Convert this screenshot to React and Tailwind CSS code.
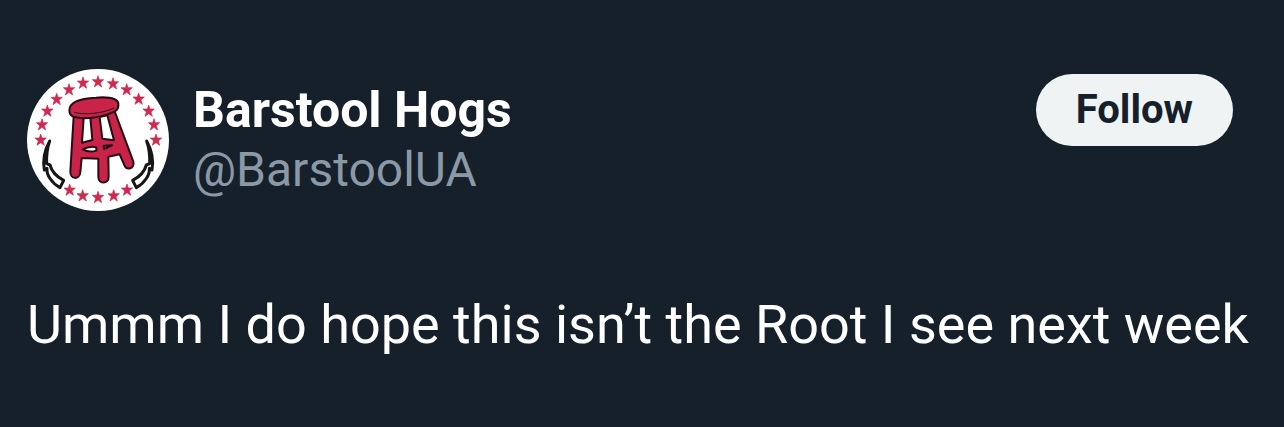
const STARS = [
  [62, 240], [66, 194], [82, 153], [110, 118], [147, 89], [189, 69], [234, 65],
  [279, 71], [320, 89], [356, 117], [386, 153], [402, 194], [408, 240],
  [149, 390], [188, 407], [234, 412], [281, 407], [321, 390],
]

const TUSK = 'M89 243 C73 272 68 302 73 330 L81 325 C79 344 94 368 120 383 L131 361 C108 349 95 334 90 315 L80 311 C79 287 82 263 89 243 Z'

function Avatar() {
  return (
    <svg viewBox="21 27 426 426" className="size-[142px] shrink-0" role="img" aria-label="Barstool Hogs avatar">
      <circle cx="234" cy="240" r="213" fill="#fff" />
      <g fill="#cf2950" stroke="#cf2950" strokeWidth="2">
        {STARS.map(([x, y]) => (
          <path
            key={`${x}-${y}`}
            transform={`translate(${x} ${y})`}
            d="M0 -18 L4 -6 L17 -6 L7 3 L11 16 L0 8 L-11 16 L-7 3 L-17 -6 L-4 -6 Z"
          />
        ))}
      </g>

      {/* tusks */}
      <g fill="#fff" stroke="#161616" strokeWidth="9" strokeLinejoin="round">
        <path d={TUSK} />
        <path d={TUSK} transform="translate(469 0) scale(-1 1)" />
      </g>

      {/* stool */}
      <g fill="#c92349" stroke="#260d15" strokeWidth="6" strokeLinejoin="round">
        <path d="M161 168 L151 335 C150 359 179 360 181 337 L185 294 L235 296 L235 351 C236 374 266 373 266 350 L265 290 L299 283 L312 313 C320 334 345 326 340 305 L284 154 Z" />
        <path fill="#fff" d="M191 172 L211 172 L217 240 L186 248 Z" />
        <path fill="#fff" d="M239 171 L262 166 L282 241 L247 236 Z" />
        <path fill="#fff" d="M188 268 C203 260 220 259 229 262 L229 272 C217 276 200 275 188 268 Z" />
        <path fill="#fff" d="M251 257 L276 256 L252 267 Z" />
        <path d="M148 151 C148 126 184 115 228 113 C266 110 292 116 295 130 C297 145 291 151 283 155 C252 170 194 181 160 170 C152 167 148 160 148 151 Z" />
        <path fill="none" strokeWidth="3" d="M162 157 C190 165 246 162 282 144" />
      </g>
    </svg>
  )
}

export default function App() {
  return (
    <main className="min-h-screen bg-[#16202a] px-[27px] pt-[69px] pb-16 font-['Roboto',sans-serif]">
      <header className="flex items-start justify-between pr-6">
        <div className="flex items-center gap-6">
          <Avatar />
          <div>
            <h1 className="text-[50px] leading-[60px] font-bold text-white">Barstool Hogs</h1>
            <a href="#profile" className="block text-[48px] leading-[60px] text-[#8b98a5]">@BarstoolUA</a>
          </div>
        </div>
        <button type="button" className="mt-[5px] h-[72px] rounded-full bg-[#eff3f4] px-10 text-[40px] font-bold text-[#16202a]">
          Follow
        </button>
      </header>
      <p className="mt-20 text-[54px] leading-[68px] text-white">
        Ummm I do hope this isn’t the Root I see next week
      </p>
    </main>
  )
}
